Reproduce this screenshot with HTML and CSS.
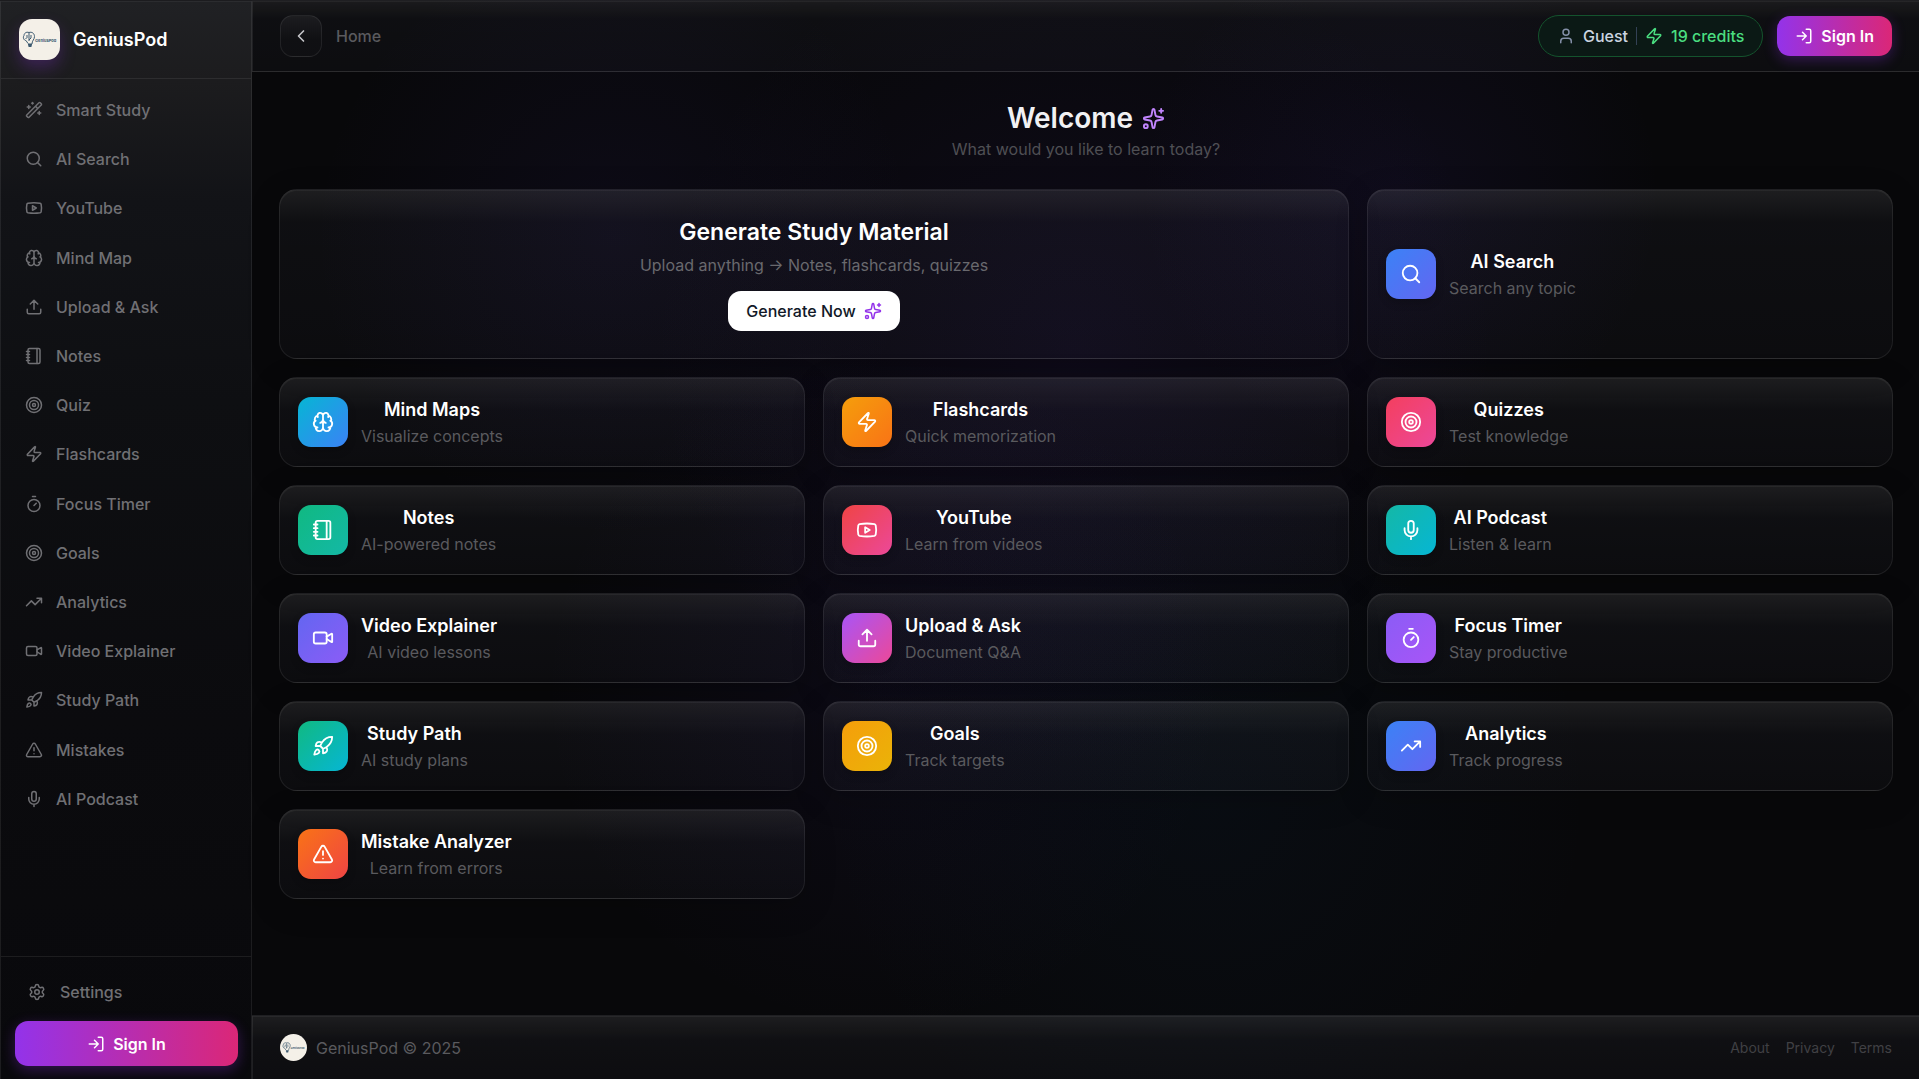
FILE: index.html
```html
<!DOCTYPE html>
<html lang="en">
<head>
<meta charset="utf-8">
<meta name="viewport" content="width=device-width, initial-scale=1">
<title>GeniusPod</title>
<link rel="stylesheet" href="styles.css">
</head>
<body>
<svg class="sprite" aria-hidden="true">
  <symbol id="wand" viewBox="0 0 24 24"><path d="m21.64 3.64-1.28-1.28a1.21 1.21 0 0 0-1.72 0L2.36 18.64a1.21 1.21 0 0 0 0 1.72l1.28 1.28a1.2 1.2 0 0 0 1.72 0L21.64 5.36a1.2 1.2 0 0 0 0-1.72M14 7l3 3M5 6v4M19 14v4M10 2v2M7 8H3M21 16h-4M11 3H9"/></symbol>
  <symbol id="search" viewBox="0 0 24 24"><circle cx="11" cy="11" r="8"/><path d="m21 21-4.34-4.34"/></symbol>
  <symbol id="youtube" viewBox="0 0 24 24"><path d="M2.5 17a24.12 24.12 0 0 1 0-10 2 2 0 0 1 1.4-1.4 49.56 49.56 0 0 1 16.2 0A2 2 0 0 1 21.5 7a24.12 24.12 0 0 1 0 10 2 2 0 0 1-1.4 1.4 49.55 49.55 0 0 1-16.2 0A2 2 0 0 1 2.5 17M10 15l5-3-5-3z"/></symbol>
  <symbol id="brain" viewBox="0 0 24 24"><path d="M12 18V5M15 13a4.17 4.17 0 0 1-3-4 4.17 4.17 0 0 1-3 4M17.598 6.5A3 3 0 1 0 12 5a3 3 0 1 0-5.598 1.5M17.997 5.125a4 4 0 0 1 2.526 5.77M18 18a4 4 0 0 0 2-7.464M19.967 17.483A4 4 0 1 1 12 18a4 4 0 1 1-7.967-.517M6 18a4 4 0 0 1-2-7.464M6.003 5.125a4 4 0 0 0-2.526 5.77"/></symbol>
  <symbol id="upload" viewBox="0 0 24 24"><path d="M12 3v12M17 8l-5-5-5 5M21 15v4a2 2 0 0 1-2 2H5a2 2 0 0 1-2-2v-4"/></symbol>
  <symbol id="notebook" viewBox="0 0 24 24"><path d="M2 6h4M2 10h4M2 14h4M2 18h4M16 2v20"/><rect x="4" y="2" width="16" height="20" rx="2"/></symbol>
  <symbol id="target" viewBox="0 0 24 24"><circle cx="12" cy="12" r="10"/><circle cx="12" cy="12" r="6"/><circle cx="12" cy="12" r="2"/></symbol>
  <symbol id="zap" viewBox="0 0 24 24"><path d="M4 14a1 1 0 0 1-.78-1.63l9.9-10.2a.5.5 0 0 1 .86.46l-1.92 6.02A1 1 0 0 0 13 10h7a1 1 0 0 1 .78 1.63l-9.9 10.2a.5.5 0 0 1-.86-.46l1.92-6.02A1 1 0 0 0 11 14z"/></symbol>
  <symbol id="timer" viewBox="0 0 24 24"><path d="M10 2h4M12 14l3-3"/><circle cx="12" cy="14" r="8"/></symbol>
  <symbol id="trend" viewBox="0 0 24 24"><path d="M16 7h6v6M22 7l-8.500 8.500-5-5L2 17"/></symbol>
  <symbol id="video" viewBox="0 0 24 24"><path d="m16 13 5.223 3.482a.5.5 0 0 0 .777-.416V7.870a.5.5 0 0 0-.752-.432L16 10.500"/><rect x="2" y="6" width="14" height="12" rx="2"/></symbol>
  <symbol id="rocket" viewBox="0 0 24 24"><path d="M4.500 16.500c-1.500 1.260-2 5-2 5s3.740-.5 5-2c.71-.84.7-2.130-.09-2.910a2.180 2.180 0 0 0-2.910-.09zM12 15l-3-3a22 22 0 0 1 2-3.950A12.880 12.880 0 0 1 22 2c0 2.720-.78 7.500-6 11a22.350 22.350 0 0 1-4 2zM9 12H4s.55-3.030 2-4c1.620-1.080 5 0 5 0M12 15v5s3.030-.55 4-2c1.080-1.620 0-5 0-5"/></symbol>
  <symbol id="alert" viewBox="0 0 24 24"><path d="m21.730 18-8-14a2 2 0 0 0-3.480 0l-8 14A2 2 0 0 0 4 21h16a2 2 0 0 0 1.730-3M12 9v4M12 17h.01"/></symbol>
  <symbol id="mic" viewBox="0 0 24 24"><path d="M12 19v3M19 10v2a7 7 0 0 1-14 0v-2"/><rect x="9" y="2" width="6" height="13" rx="3"/></symbol>
  <symbol id="gear" viewBox="0 0 24 24"><path d="M9.671 4.136a2.340 2.340 0 0 1 4.659 0 2.340 2.340 0 0 0 3.319 1.915 2.340 2.340 0 0 1 2.330 4.033 2.340 2.340 0 0 0 0 3.831 2.340 2.340 0 0 1-2.330 4.033 2.340 2.340 0 0 0-3.319 1.915 2.340 2.340 0 0 1-4.659 0 2.340 2.340 0 0 0-3.320-1.915 2.340 2.340 0 0 1-2.330-4.033 2.340 2.340 0 0 0 0-3.831A2.340 2.340 0 0 1 6.350 6.051a2.340 2.340 0 0 0 3.319-1.915"/><circle cx="12" cy="12" r="3"/></symbol>
  <symbol id="login" viewBox="0 0 24 24"><path d="m10 17 5-5-5-5M15 12H3M15 3h4a2 2 0 0 1 2 2v14a2 2 0 0 1-2 2h-4"/></symbol>
  <symbol id="user" viewBox="0 0 24 24"><path d="M19 21v-2a4 4 0 0 0-4-4H9a4 4 0 0 0-4 4v2"/><circle cx="12" cy="7" r="4"/></symbol>
  <symbol id="chevron" viewBox="0 0 24 24"><path d="m15 18-6-6 6-6"/></symbol>
  <symbol id="sparkles" viewBox="0 0 24 24"><path d="M11.017 2.814a1 1 0 0 1 1.966 0l1.051 5.558a2 2 0 0 0 1.594 1.594l5.558 1.051a1 1 0 0 1 0 1.966l-5.558 1.051a2 2 0 0 0-1.594 1.594l-1.051 5.558a1 1 0 0 1-1.966 0l-1.051-5.558a2 2 0 0 0-1.594-1.594l-5.558-1.051a1 1 0 0 1 0-1.966l5.558-1.051a2 2 0 0 0 1.594-1.594zM20 2v4M22 4h-4"/><circle cx="4" cy="20" r="2"/></symbol>
  <symbol id="bulb" viewBox="0 0 41 41">
    <g fill="none" stroke="#3d5a70" stroke-width="1"><path d="M10 13.500c-3-1-5 1-5 3-1.500 2 0 5 2 5l2 3M10 13.500c3-1 5.500 1 5.500 4 0 3-2.500 4-2.500 7.500M10 14v8M7 17h2M12 16v3l-2 2M6.500 19.500l2-1"/><path d="M9 25.500h4M9.500 27h3" stroke-width="2"/></g>
  </symbol>
</svg>

<div class="app">
  <aside class="sidebar">
    <div class="brand">
      <svg class="logo brand-logo" viewBox="0 0 41 41"><use href="#bulb"/><text x="16" y="23">GeniusPod</text></svg>
      <span class="brand-name">GeniusPod</span>
    </div>
    <nav class="nav" aria-label="Main">
      <a href="#"><svg class="icon"><use href="#wand"/></svg>Smart Study</a>
      <a href="#"><svg class="icon"><use href="#search"/></svg>AI Search</a>
      <a href="#"><svg class="icon"><use href="#youtube"/></svg>YouTube</a>
      <a href="#"><svg class="icon"><use href="#brain"/></svg>Mind Map</a>
      <a href="#"><svg class="icon"><use href="#upload"/></svg>Upload &amp; Ask</a>
      <a href="#"><svg class="icon"><use href="#notebook"/></svg>Notes</a>
      <a href="#"><svg class="icon"><use href="#target"/></svg>Quiz</a>
      <a href="#"><svg class="icon"><use href="#zap"/></svg>Flashcards</a>
      <a href="#"><svg class="icon"><use href="#timer"/></svg>Focus Timer</a>
      <a href="#"><svg class="icon"><use href="#target"/></svg>Goals</a>
      <a href="#"><svg class="icon"><use href="#trend"/></svg>Analytics</a>
      <a href="#"><svg class="icon"><use href="#video"/></svg>Video Explainer</a>
      <a href="#"><svg class="icon"><use href="#rocket"/></svg>Study Path</a>
      <a href="#"><svg class="icon"><use href="#alert"/></svg>Mistakes</a>
      <a href="#"><svg class="icon"><use href="#mic"/></svg>AI Podcast</a>
    </nav>
    <div class="account">
      <a class="settings" href="#"><svg class="icon"><use href="#gear"/></svg>Settings</a>
      <button class="signin signin-wide" type="button"><svg class="icon"><use href="#login"/></svg>Sign In</button>
    </div>
  </aside>

  <div class="page">
    <header class="topbar">
      <button class="back" type="button" aria-label="Back"><svg class="icon"><use href="#chevron"/></svg></button>
      <span class="crumb">Home</span>
      <div class="guest">
        <svg class="icon"><use href="#user"/></svg><span>Guest</span>
        <span class="divider"></span>
        <svg class="icon credits"><use href="#zap"/></svg><span class="credits">19 credits</span>
      </div>
      <button class="signin" type="button"><svg class="icon"><use href="#login"/></svg>Sign In</button>
    </header>

    <main class="content">
      <div class="welcome">
        <h1>Welcome <svg class="icon"><use href="#sparkles"/></svg></h1>
        <p>What would you like to learn today?</p>
      </div>
      <div class="grid">
        <section class="card hero">
          <h2>Generate Study Material</h2>
          <p>Upload anything → Notes, flashcards, quizzes</p>
          <button class="generate" type="button">Generate Now <svg class="icon"><use href="#sparkles"/></svg></button>
        </section>
        <button class="card tool" type="button"><span class="tile blue"><svg class="icon"><use href="#search"/></svg></span><span class="label"><span class="title">AI Search</span><span class="sub">Search any topic</span></span></button>
        <button class="card tool" type="button"><span class="tile cyan"><svg class="icon"><use href="#brain"/></svg></span><span class="label"><span class="title">Mind Maps</span><span class="sub">Visualize concepts</span></span></button>
        <button class="card tool" type="button"><span class="tile amber"><svg class="icon"><use href="#zap"/></svg></span><span class="label"><span class="title">Flashcards</span><span class="sub">Quick memorization</span></span></button>
        <button class="card tool" type="button"><span class="tile rose"><svg class="icon"><use href="#target"/></svg></span><span class="label"><span class="title">Quizzes</span><span class="sub">Test knowledge</span></span></button>
        <button class="card tool" type="button"><span class="tile emerald"><svg class="icon"><use href="#notebook"/></svg></span><span class="label"><span class="title">Notes</span><span class="sub">AI-powered notes</span></span></button>
        <button class="card tool" type="button"><span class="tile red"><svg class="icon"><use href="#youtube"/></svg></span><span class="label"><span class="title">YouTube</span><span class="sub">Learn from videos</span></span></button>
        <button class="card tool" type="button"><span class="tile teal"><svg class="icon"><use href="#mic"/></svg></span><span class="label"><span class="title">AI Podcast</span><span class="sub">Listen &amp; learn</span></span></button>
        <button class="card tool" type="button"><span class="tile indigo"><svg class="icon"><use href="#video"/></svg></span><span class="label"><span class="title">Video Explainer</span><span class="sub">AI video lessons</span></span></button>
        <button class="card tool" type="button"><span class="tile pink"><svg class="icon"><use href="#upload"/></svg></span><span class="label"><span class="title">Upload &amp; Ask</span><span class="sub">Document Q&amp;A</span></span></button>
        <button class="card tool" type="button"><span class="tile violet"><svg class="icon"><use href="#timer"/></svg></span><span class="label"><span class="title">Focus Timer</span><span class="sub">Stay productive</span></span></button>
        <button class="card tool" type="button"><span class="tile sea"><svg class="icon"><use href="#rocket"/></svg></span><span class="label"><span class="title">Study Path</span><span class="sub">AI study plans</span></span></button>
        <button class="card tool" type="button"><span class="tile yellow"><svg class="icon"><use href="#target"/></svg></span><span class="label"><span class="title">Goals</span><span class="sub">Track targets</span></span></button>
        <button class="card tool" type="button"><span class="tile blue"><svg class="icon"><use href="#trend"/></svg></span><span class="label"><span class="title">Analytics</span><span class="sub">Track progress</span></span></button>
        <button class="card tool" type="button"><span class="tile orange"><svg class="icon"><use href="#alert"/></svg></span><span class="label"><span class="title">Mistake Analyzer</span><span class="sub">Learn from errors</span></span></button>
      </div>
    </main>

    <footer class="footer">
      <svg class="logo footer-logo" viewBox="0 0 41 41"><use href="#bulb"/><text x="16" y="23">GeniusPod</text></svg>
      <span>GeniusPod © 2025</span>
      <nav class="legal" aria-label="Legal"><a href="#">About</a><a href="#">Privacy</a><a href="#">Terms</a></nav>
    </footer>
  </div>
</div>
</body>
</html>
```
FILE: styles.css
```css
* { box-sizing: border-box; }

:root {
  --line: rgba(255, 255, 255, .08);
  --sheen: rgba(255, 255, 255, .05);
  --muted: #5a5a5e;
  --brand: linear-gradient(90deg, #9333ea, #db2777);
}

body {
  margin: 0;
  background: #08080a;
  color: #fff;
  font: 400 16px/24px Inter, "Liberation Sans", sans-serif;
}

h1, h2, p { margin: 0; }
a { color: inherit; text-decoration: none; }
button { font: inherit; color: inherit; cursor: pointer; }

.sprite { position: absolute; width: 0; height: 0; }

.icon {
  width: 18px;
  height: 18px;
  flex: none;
  fill: none;
  stroke: currentColor;
  stroke-width: 2;
  stroke-linecap: round;
  stroke-linejoin: round;
}

.logo { flex: none; background: #f4f0e8; }
.logo text { fill: #3d5a70; font-size: 4px; font-weight: 700; }

.app {
  display: grid;
  grid-template-columns: 252px 1fr;
  min-height: 100vh;
  background:
    radial-gradient(circle 300px at 32% 22%, rgba(76, 50, 180, .08), transparent),
    radial-gradient(circle 420px at 56% 32%, rgba(76, 40, 170, .1), transparent),
    radial-gradient(circle 260px at 73% 18%, rgba(76, 50, 180, .09), transparent),
    radial-gradient(circle 340px at 46% 64%, rgba(76, 50, 180, .07), transparent),
    radial-gradient(circle 380px at 63% 74%, rgba(20, 70, 120, .08), transparent);
}

/* Sidebar */
.sidebar {
  display: flex;
  flex-direction: column;
  border: 1px solid var(--line);
  border-width: 1px 1px 0;
  background: linear-gradient(180deg, #202124 0, #1c1c1e 80px, #121317 200px, #0e0f12 400px, #0b0b0e 720px, #09090c 100%);
  box-shadow: inset 0 1px 0 var(--sheen);
}

.brand {
  display: flex;
  align-items: center;
  gap: 13px;
  padding: 18px;
  border-bottom: 1px solid var(--line);
}

.brand-logo {
  width: 41px;
  height: 41px;
  border-radius: 13px;
  box-shadow: 0 8px 16px rgba(147, 51, 234, .25);
}

.brand-name { font-size: 18px; font-weight: 600; line-height: 27px; }

.nav {
  flex: 1;
  display: flex;
  flex-direction: column;
  justify-content: space-between;
  padding: 9px 12px 135px;
}

.nav a, .settings {
  display: flex;
  align-items: center;
  gap: 13px;
  padding: 10px 12px;
  color: #707074;
  font-weight: 500;
}

.account {
  display: grid;
  gap: 8px;
  padding: 14px 13px 13px 14px;
  border-top: 1px solid var(--line);
}

.settings { padding: 9px 13px; gap: 14px; }

.signin {
  display: flex;
  align-items: center;
  justify-content: center;
  gap: 8px;
  height: 40px;
  padding: 0 18px;
  border: 0;
  border-radius: 13px;
  background: var(--brand);
  box-shadow: 0 4px 14px rgba(147, 51, 234, .3);
  color: #fff;
  font-weight: 600;
}

.signin-wide { height: 45px; }

/* Main column */
.page { display: flex; flex-direction: column; min-width: 0; }

.topbar, .footer {
  display: flex;
  align-items: center;
  padding: 0 27px;
  border: 1px solid var(--line);
  border-right: 0;
}

.topbar {
  height: 72px;
  background: linear-gradient(180deg, rgba(255, 255, 255, .08), rgba(200, 210, 255, .03) 18px, rgba(200, 210, 255, .025));
  box-shadow: inset 0 1px 0 var(--sheen);
}

.back {
  display: grid;
  place-items: center;
  width: 42px;
  height: 42px;
  padding: 0;
  border: 1px solid var(--line);
  border-radius: 13px;
  background: linear-gradient(180deg, rgba(255, 255, 255, .06), rgba(255, 255, 255, .01) 60%);
  color: #c4c4c8;
}

.back .icon { width: 20px; height: 20px; }

.crumb { margin: 0 auto 0 14px; color: var(--muted); font-weight: 500; }

.guest {
  display: flex;
  align-items: center;
  gap: 8px;
  height: 42px;
  margin-right: 14px;
  padding: 0 18px;
  border: 1px solid #14532d;
  border-radius: 21px;
  background: #0b1915;
  color: #cbd5e1;
  font-weight: 500;
}

.guest .icon { color: #8490a8; }
.guest .credits { color: #4ade80; }
.divider { width: 1px; height: 18px; background: #334155; }

.content { flex: 1; padding: 28px 26px 28px 27px; }

.welcome { margin-bottom: 28px; text-align: center; color: #4f4f54; }

.welcome h1 {
  display: flex;
  align-items: center;
  justify-content: center;
  gap: 9px;
  padding-bottom: 1px;
  color: #f1f1f3;
  font-size: 28px;
  font-weight: 600;
  line-height: 36px;
}

.welcome .icon { width: 23px; height: 23px; color: #c084fc; }

.grid { display: grid; grid-template-columns: repeat(3, 1fr); gap: 18px; }

.card {
  border: 1px solid var(--line);
  border-radius: 18px;
  background: linear-gradient(180deg, rgba(255, 255, 255, .09), rgba(210, 215, 255, .035) 32px, rgba(210, 215, 255, .025));
  box-shadow: inset 0 1px 0 var(--sheen), 0 8px 32px rgba(0, 0, 0, .2);
}

.hero {
  grid-column: span 2;
  display: flex;
  flex-direction: column;
  align-items: center;
  padding: 27px;
}

.hero h2 { font-size: 23px; font-weight: 600; line-height: 30px; }
.hero p { margin: 6px 0 14px; color: #69696e; }

.generate {
  display: flex;
  align-items: center;
  gap: 8px;
  height: 40px;
  padding: 0 18px;
  border: 0;
  border-radius: 13px;
  background: #fff;
  color: #111827;
  font-weight: 500;
}

.generate .icon { color: #9333ea; }

.tool {
  display: flex;
  align-items: center;
  gap: 13px;
  padding: 18px;
  text-align: center;
}

.tile {
  display: grid;
  place-items: center;
  width: 50px;
  height: 50px;
  border-radius: 13px;
  box-shadow: 0 4px 8px rgba(0, 0, 0, .2);
}

.tile .icon { width: 22px; height: 22px; }
.label { display: grid; gap: 2px; }
.title { font-size: 18px; font-weight: 600; line-height: 27px; }
.sub { color: var(--muted); line-height: 23px; }

.blue { background: linear-gradient(135deg, #3b82f6, #6366f1); }
.cyan { background: linear-gradient(135deg, #06b6d4, #3b82f6); }
.amber { background: linear-gradient(135deg, #f59e0b, #f97316); }
.rose { background: linear-gradient(135deg, #f43f5e, #ec4899); }
.emerald { background: linear-gradient(135deg, #10b981, #14b8a6); }
.red { background: linear-gradient(135deg, #ef4444, #ec4899); }
.teal { background: linear-gradient(135deg, #14b8a6, #06b6d4); }
.indigo { background: linear-gradient(135deg, #6366f1, #8b5cf6); }
.pink { background: linear-gradient(135deg, #a855f7, #ec4899); }
.violet { background: linear-gradient(135deg, #8b5cf6, #a855f7); }
.sea { background: linear-gradient(135deg, #10b981, #06b6d4); }
.yellow { background: linear-gradient(135deg, #f59e0b, #eab308); }
.orange { background: linear-gradient(135deg, #f97316, #ef4444); }

.footer {
  gap: 9px;
  height: 64px;
  border-bottom: 0;
  background: linear-gradient(180deg, rgba(255, 255, 255, .09), rgba(210, 215, 255, .035) 24px, rgba(210, 215, 255, .025));
  box-shadow: inset 0 1px 0 var(--sheen);
  color: var(--muted);
}

.footer-logo { width: 27px; height: 27px; border-radius: 50%; }

.legal {
  display: flex;
  gap: 16px;
  margin-left: auto;
  color: #404044;
  font-size: 14px;
}
```
